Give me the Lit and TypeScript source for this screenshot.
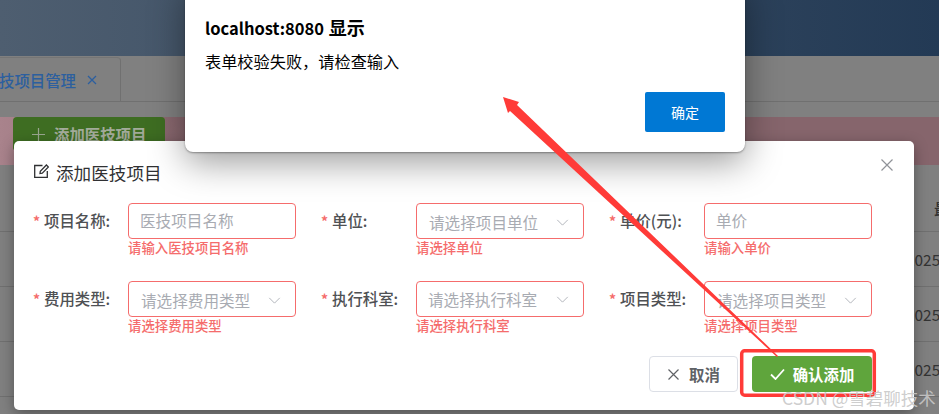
import { LitElement, html, css, svg } from 'lit';
import { customElement } from 'lit/decorators.js';

const FIELDS = [
  { label: '项目名称:', hint: '医技项目名称', error: '请输入医技项目名称', kind: 'input a' },
  { label: '单位:', hint: '请选择项目单位', error: '请选择单位', kind: 'select b' },
  { label: '单价(元):', hint: '单价', error: '请输入单价', kind: 'input a' },
  { label: '费用类型:', hint: '请选择费用类型', error: '请选择费用类型', kind: 'select c' },
  { label: '执行科室:', hint: '请选择执行科室', error: '请选择执行科室', kind: 'select d' },
  { label: '项目类型:', hint: '请选择项目类型', error: '请选择项目类型', kind: 'select c' },
];

const MESSAGE = '表单校验失败\uFF0C请检查输入';

const chevron = html`<svg class="chevron" viewBox="0 0 14 8"><path d="M1 1l6 6 6-6" fill="none" stroke="#a8abb2" stroke-width="1"/></svg>`;

@customElement('app-root')
export class AppRoot extends LitElement {
  static styles = css`
    :host {
      display: block;
      position: relative;
      width: 939px;
      height: 414px;
      overflow: hidden;
      background: #808080;
      font-family: "Noto Sans CJK SC", "Liberation Sans", sans-serif;
    }
    .header {
      height: 56px;
      background: linear-gradient(90deg, #4e5e70, #233a55);
    }
    .tabs {
      height: 45px;
      border-bottom: 1px solid #707070;
      display: flex;
    }
    .tab {
      width: 121px;
      box-sizing: border-box;
      border-right: 1px solid #707070;
      border-top: 1px solid #757575;
      border-top-right-radius: 4px;
      margin-top: 1px;
      display: flex;
      align-items: center;
      color: #2c5f9f;
      font-size: 15.4px;
      font-weight: 500;
      overflow: hidden;
    }
    .tab span { margin-left: -1px; white-space: nowrap; }
    .tab svg { width: 10px; height: 10px; margin-left: 11px; }
    .band {
      height: 48px;
      margin-top: 15px;
      background: linear-gradient(90deg, #a9838c, #86656c 190px);
    }
    .add {
      width: 152px;
      height: 34px;
      margin-left: 13px;
      background: #3e6d22;
      border-radius: 4px;
      display: flex;
      align-items: center;
      padding-left: 19px;
      box-sizing: border-box;
      color: #a3ab9b;
      font-size: 15.4px;
      font-weight: 700;
    }
    .add svg { width: 13px; height: 13px; margin-right: 9px; }
    .thead {
      height: 67px;
      box-sizing: border-box;
      border-bottom: 1px solid #707070;
      padding: 32px 0 0 934px;
      color: #333;
      font-size: 15.4px;
      font-weight: 500;
      white-space: nowrap;
    }
    .row {
      height: 55px;
      box-sizing: border-box;
      border-bottom: 1px solid #707070;
      padding: 16px 0 0 906px;
      color: #333;
      font-size: 15.4px;
      white-space: nowrap;
    }
    .dialog {
      position: absolute;
      left: 14px;
      top: 141px;
      width: 900px;
      height: 269px;
      box-sizing: border-box;
      padding: 20px 42px 0 19px;
      background: #fff;
      border-radius: 5px;
      box-shadow: 0 4px 14px rgba(0, 0, 0, 0.35);
    }
    .title {
      display: flex;
      align-items: center;
      height: 24px;
      margin-bottom: 18px;
      color: #303133;
      font-size: 17.6px;
      line-height: 22px;
    }
    .title svg { width: 15px; height: 15px; margin: -3px 7px 0 1px; }
    .close {
      position: absolute;
      right: 21px;
      top: 18px;
      width: 12px;
      height: 12px;
    }
    .form {
      display: grid;
      grid-template-columns: repeat(3, 263px);
      column-gap: 25px;
      row-gap: 22px;
    }
    .field { display: flex; height: 56px; }
    .label {
      width: 95px;
      height: 34px;
      line-height: 34px;
      color: #4f5154;
      font-size: 15.4px;
      font-weight: 500;
      white-space: nowrap;
    }
    .star {
      display: inline-block;
      width: 11px;
      color: #f56c6c;
      font-size: 14px;
      font-weight: 700;
    }
    .box {
      width: 168px;
      height: 36px;
      box-sizing: border-box;
      border: 1px solid #f56c6c;
      border-radius: 4px;
      display: flex;
      align-items: center;
      justify-content: space-between;
      color: #a8abb2;
      font-size: 15.6px;
      white-space: nowrap;
    }
    .a { padding: 0 0 3px 11px; }
    .b { padding: 2px 14px 0 12px; }
    .c { padding: 2px 14px 0 12px; }
    .d { padding: 0 14px 0 11px; }
    .chevron { width: 13px; height: 7px; }
    .error {
      color: #f56c6c;
      font-size: 13.4px;
      font-weight: 500;
      line-height: 18px;
      margin-top: -1px;
      white-space: nowrap;
    }
    .footer {
      display: flex;
      justify-content: flex-end;
      gap: 14px;
      margin-top: 19px;
    }
    .btn {
      height: 36px;
      box-sizing: border-box;
      border-radius: 4px;
      display: flex;
      align-items: center;
      justify-content: center;
      font-size: 15.4px;
      font-weight: 700;
    }
    .btn svg { margin-right: 8px; }
    .cancel {
      width: 89px;
      padding-left: 1px;
      background: #fff;
      border: 1px solid #dcdfe6;
      color: #606266;
    }
    .cancel svg { width: 11px; height: 11px; margin-right: 10px; }
    .ok {
      width: 120px;
      background: #5fa53c;
      color: #fff;
    }
    .ok svg { width: 15px; height: 12px; }
    .alert {
      position: absolute;
      left: 185px;
      top: -20px;
      width: 560px;
      height: 172px;
      box-sizing: border-box;
      padding: 34px 20px 0;
      background: #fff;
      border-radius: 8px;
      box-shadow: 0 1px 2px rgba(0, 0, 0, 0.35), 0 10px 36px rgba(0, 0, 0, 0.4);
      color: #000;
    }
    .alert h1 {
      margin: 0;
      height: 26px;
      line-height: 26px;
      font-size: 16.5px;
      font-weight: 700;
    }
    .alert h1 span { font-size: 18px; margin-left: 1px; }
    .alert p {
      margin: 8px 0 0;
      line-height: 26px;
      font-size: 16.2px;
      font-weight: 400;
    }
    .confirm {
      position: absolute;
      right: 20px;
      bottom: 20px;
      width: 80px;
      height: 40px;
      background: #0078d4;
      border-radius: 2px;
      color: #fff;
      font-size: 14px;
      line-height: 40px;
      text-align: center;
    }
    .marks {
      position: absolute;
      left: 0;
      top: 0;
      width: 939px;
      height: 414px;
    }
    .watermark {
      position: absolute;
      left: 782px;
      top: 386px;
      color: rgba(200, 200, 200, 0.9);
      font-size: 17.5px;
      line-height: 24px;
      white-space: nowrap;
    }
  `;

  renderField(f: (typeof FIELDS)[number]) {
    return html`
      <div class="field">
        <div class="label"><span class="star">*</span>${f.label}</div>
        <div>
          <div class="box ${f.kind}">
            <span>${f.hint}</span>
            ${f.kind.startsWith('select') ? chevron : ''}
          </div>
          <div class="error">${f.error}</div>
        </div>
      </div>
    `;
  }

  render() {
    return html`
      <div class="header"></div>
      <div class="tabs">
        <div class="tab">
          <span>技项目管理</span>
          <svg viewBox="0 0 10 10"><path d="M1 1l8 8M9 1l-8 8" stroke="#2c5f9f" stroke-width="1.3" fill="none"/></svg>
        </div>
      </div>
      <div class="band">
        <div class="add">
          <svg viewBox="0 0 13 13"><path d="M6.5 0v13M0 6.5h13" stroke="#9aa68f" stroke-width="1.2" fill="none"/></svg>
          <span>添加医技项目</span>
        </div>
      </div>
      <div class="thead">最</div>
      <div class="row">2025</div>
      <div class="row">2025</div>
      <div class="row">2025</div>

      <div class="dialog">
        <div class="title">
          <svg viewBox="0 0 15 15" fill="none" stroke="#303133" stroke-width="1.3">
            <path d="M8.5 1.5H.7v11.8h12.6V7"/>
            <path d="M6 9.5l.3-2.3L12.4 1l2 2-6.1 6.2z"/>
          </svg>
          添加医技项目
        </div>
        <svg class="close" viewBox="0 0 12 12"><path d="M.5.5l11 11M11.5.5l-11 11" stroke="#909399" stroke-width="1.2" fill="none"/></svg>
        <div class="form">${FIELDS.map((f) => this.renderField(f))}</div>
        <div class="footer">
          <div class="btn cancel">
            <svg viewBox="0 0 11 11"><path d="M.5.5l10 10M10.5.5l-10 10" stroke="#606266" stroke-width="1.2" fill="none"/></svg>
            取消
          </div>
          <div class="btn ok">
            <svg viewBox="0 0 15 12"><path d="M1 6.5l4.5 4.5L14 1.5" stroke="#fff" stroke-width="1.8" fill="none"/></svg>
            确认添加
          </div>
        </div>
      </div>

      <div class="alert">
        <h1>localhost:8080 <span>显示</span></h1>
        <p>${MESSAGE}</p>
        <div class="confirm">确定</div>
      </div>

      <svg class="marks" viewBox="0 0 939 414">
        ${svg`
          <polygon points="503,97 519,102 517,105 778,356 777,357 510,111 508,113" fill="#ff3b38"/>
          <rect x="741.7" y="350.8" width="132.6" height="44.4" rx="3" fill="none" stroke="#ff3b38" stroke-width="3.5"/>
        `}
      </svg>
      <div class="watermark">CSDN @雪碧聊技术</div>
    `;
  }
}
